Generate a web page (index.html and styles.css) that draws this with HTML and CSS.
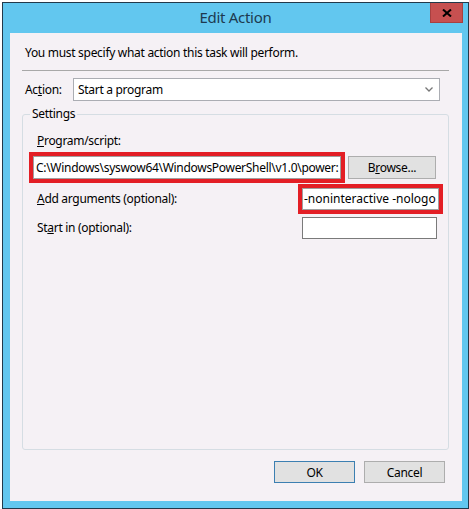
FILE: index.html
```html
<!DOCTYPE html>
<html lang="en">
<head>
    <meta charset="UTF-8">
    <title>Edit Action</title>
    <link rel="stylesheet" href="styles.css">
</head>
<body>
    <div class="window">
        <div class="titlebar">
            <div class="title">Edit Action</div>
            <button class="close-btn">
                <svg width="10" height="8" viewBox="0 0 10 8">
                    <path d="M1 0.5 L9 7.5 M9 0.5 L1 7.5" stroke="#000" stroke-width="2"/>
                </svg>
            </button>
        </div>

        <div class="content">
            <div class="intro">You must specify what action this task will perform.</div>
            <div class="separator"></div>

            <div class="action-row">
                <label class="action-label">Ac<u>t</u>ion:</label>
                <div class="select">
                    <span>Start a program</span>
                    <svg width="8" height="5" viewBox="0 0 8 5">
                        <path d="M0.5 0.5 L4 4 L7.5 0.5" stroke="#777" stroke-width="1.3" fill="none"/>
                    </svg>
                </div>
            </div>

            <fieldset class="settings">
                <legend>Settings</legend>

                <div class="field-label"><u>P</u>rogram/script:</div>
                <div class="program-row">
                    <div class="highlight">
                        <div class="textbox program-box">C:\Windows\syswow64\WindowsPowerShell\v1.0\power:</div>
                    </div>
                    <button class="btn browse-btn">B<u>r</u>owse...</button>
                </div>

                <div class="arg-row">
                    <div class="field-label"><u>A</u>dd arguments (optional):</div>
                    <div class="highlight">
                        <div class="textbox args-box">-noninteractive -nologo</div>
                    </div>
                </div>

                <div class="start-row">
                    <div class="field-label">St<u>a</u>rt in (optional):</div>
                    <div class="textbox start-box"></div>
                </div>
            </fieldset>

            <div class="footer">
                <button class="btn ok-btn">OK</button>
                <button class="btn">Cancel</button>
            </div>
        </div>
    </div>
</body>
</html>
```

FILE: styles.css
```css
body {
    margin: 0;
    background: #ffffff;
    font-family: 'Noto Sans', sans-serif;
    font-size: 12px;
    line-height: 16px;
    letter-spacing: -0.3px;
    color: #000;
}
.window {
    margin: 2px 0 0 2px;
    width: 465px;
    height: 505px;
    border: 1px solid #22394a;
    background: #62c7ef;
    display: flex;
    flex-direction: column;
}
.titlebar {
    height: 30px;
    display: grid;
    grid-template-columns: 1fr auto 1fr;
}
.title {
    grid-column: 2;
    font-size: 15px;
    line-height: 29px;
    color: #1d3a50;
}
.close-btn {
    grid-column: 3;
    justify-self: end;
    align-self: start;
    width: 33px;
    height: 20px;
    margin-right: 5px;
    padding: 0;
    background: #c75050;
    border: 1px solid #a84040;
    border-top: none;
    display: flex;
    align-items: center;
    justify-content: center;
}
.content {
    flex: 1;
    margin: 0 6px 7px 7px;
    background: #f5f1f5;
    padding: 12px 13px 18px 12px;
    display: flex;
    flex-direction: column;
}
.intro {
    padding-left: 3px;
}
.separator {
    height: 1px;
    background: #a8a8a8;
    margin-top: 9px;
}
.action-row {
    display: flex;
    align-items: center;
    margin-top: 7px;
    padding-left: 3px;
}
.action-label {
    width: 48px;
}
.select {
    flex: 1;
    height: 21px;
    margin-right: 9px;
    border: 1px solid #abadb3;
    background: #fff;
    display: flex;
    align-items: center;
    justify-content: space-between;
    padding: 0 6px 0 4px;
}
.settings {
    flex: 1;
    margin: 5px 0 0 0;
    border: 1px solid #d5dde3;
    border-radius: 3px;
    padding: 11px 5px 0 6px;
    min-width: 0;
}
.settings legend {
    margin-left: 1px;
    padding: 0 2px;
}
.field-label {
    padding-left: 8px;
}
.program-row {
    display: flex;
    align-items: center;
    gap: 3px;
    margin-top: 3px;
}
.highlight {
    border: 4px solid #e31e25;
    background: #fff;
}
.textbox {
    background: #fff;
    border: 1px solid #a0a0a0;
    padding: 0 2px;
    white-space: nowrap;
    overflow: hidden;
    box-sizing: border-box;
}
.program-box {
    width: 308px;
    height: 23px;
    line-height: 21px;
}
.browse-btn {
    width: 88px;
}
.arg-row {
    display: flex;
    align-items: center;
    justify-content: space-between;
    margin-top: 1px;
}
.args-box {
    width: 137px;
    height: 22px;
    line-height: 20px;
    padding: 0 1px;
    letter-spacing: 0;
}
.start-row {
    display: flex;
    align-items: center;
    justify-content: space-between;
    margin-top: 3px;
}
.start-box {
    width: 135px;
    height: 22px;
    margin-right: 6px;
    border-color: #7a7a7a;
}
.btn {
    height: 23px;
    background: #e1e1e1;
    border: 1px solid #adadad;
    font-family: 'Noto Sans', sans-serif;
    font-size: 12px;
    letter-spacing: -0.3px;
    color: #000;
    padding: 0;
}
.footer {
    display: flex;
    justify-content: flex-end;
    gap: 9px;
    margin-top: 11px;
    padding-right: 4px;
}
.footer .btn {
    width: 81px;
    height: 22px;
}
.ok-btn {
    border-color: #3c7fb1;
}
```
